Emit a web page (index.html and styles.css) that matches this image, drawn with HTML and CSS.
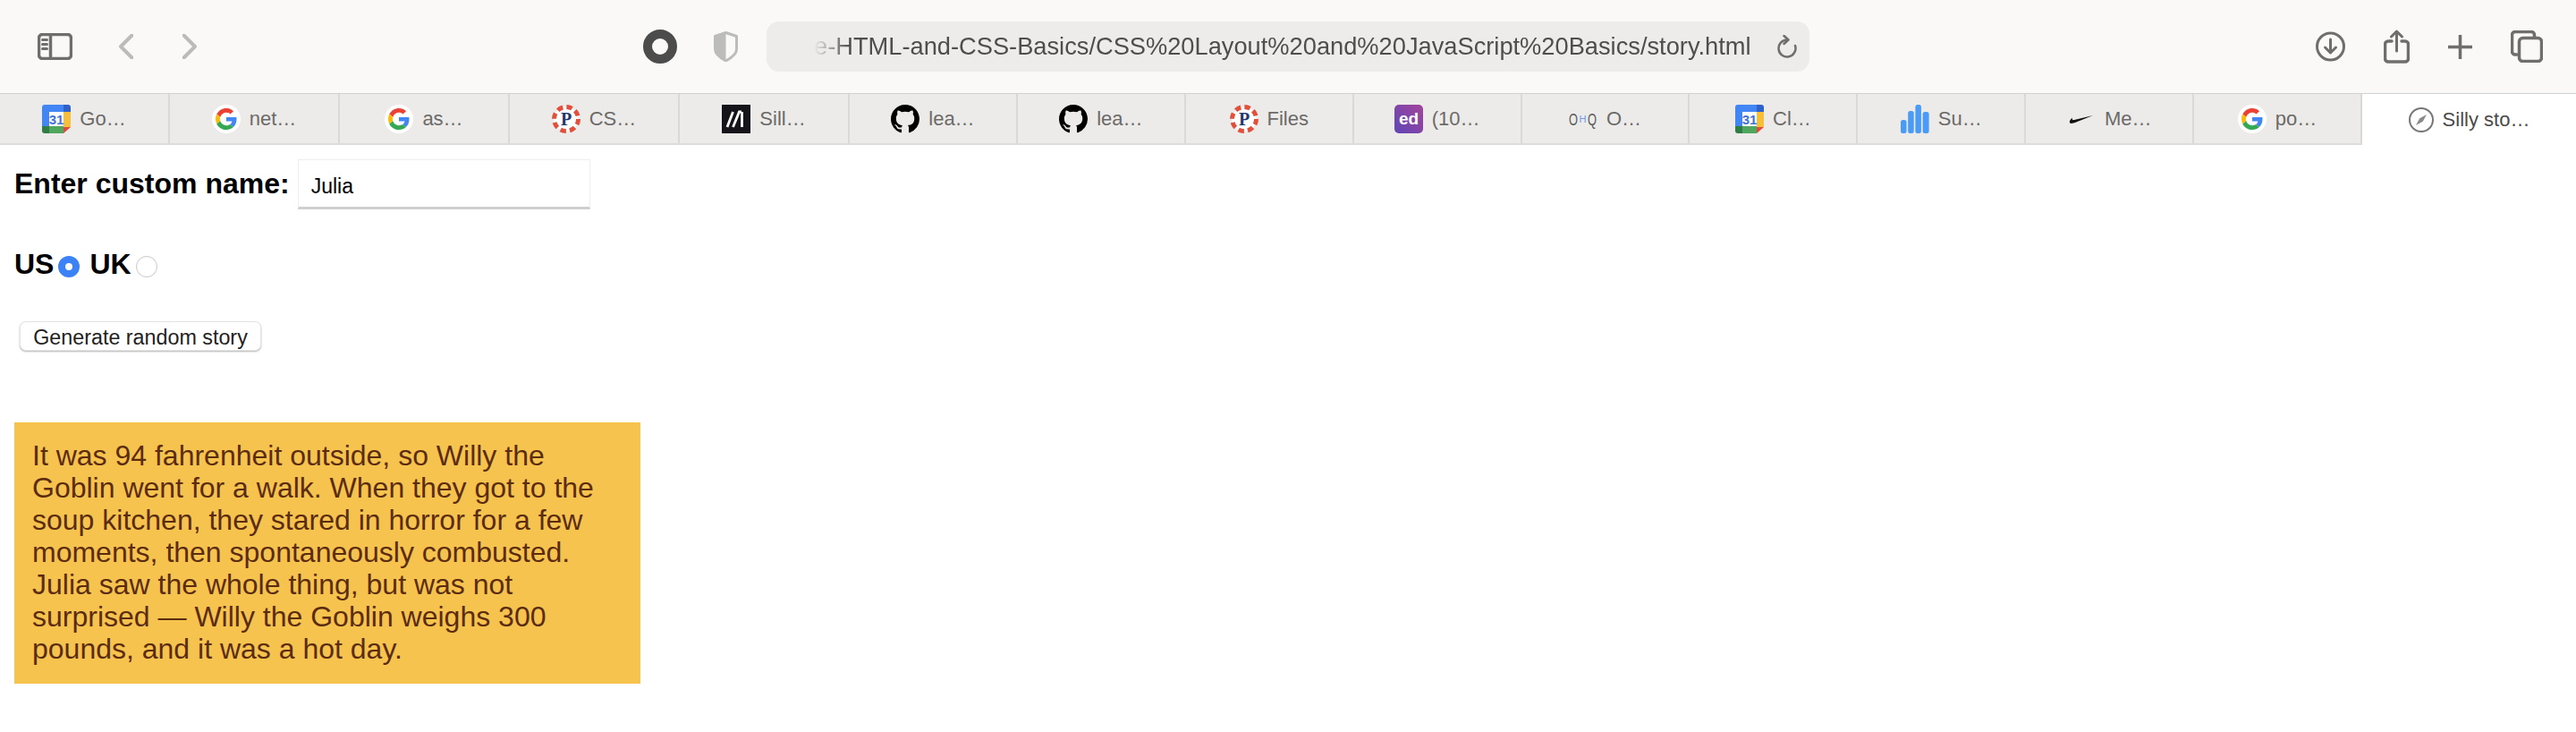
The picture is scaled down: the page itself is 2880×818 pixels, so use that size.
FILE: index.html
```html
<!DOCTYPE html>
<html lang="en">
<head>
    <meta charset="UTF-8">
    <title>Silly story generator</title>
    <link rel="stylesheet" href="styles.css">
</head>
<body>
    <!-- Shared favicons -->
    <svg class="defs" width="0" height="0" aria-hidden="true">
        <symbol id="ico-google" viewBox="0 0 32 32">
            <circle cx="16" cy="16" r="16" fill="#fff"/>
            <g transform="translate(4 4) scale(.5)">
                <path fill="#EA4335" d="M24 9.5c3.54 0 6.71 1.22 9.21 3.6l6.85-6.85C35.9 2.38 30.47 0 24 0 14.62 0 6.51 5.38 2.56 13.22l7.98 6.19C12.43 13.72 17.74 9.5 24 9.5z"/>
                <path fill="#4285F4" d="M46.98 24.55c0-1.57-.15-3.09-.38-4.55H24v9.02h12.94c-.58 2.96-2.26 5.48-4.78 7.18l7.73 6c4.51-4.18 7.09-10.36 7.09-17.65z"/>
                <path fill="#FBBC05" d="M10.53 28.59c-.48-1.45-.76-2.99-.76-4.59s.27-3.14.76-4.59l-7.98-6.19C.92 16.46 0 20.12 0 24c0 3.88.92 7.54 2.56 10.78l7.97-6.19z"/>
                <path fill="#34A853" d="M24 48c6.48 0 11.93-2.13 15.89-5.81l-7.73-6c-2.15 1.45-4.92 2.3-8.16 2.3-6.26 0-11.57-4.22-13.47-9.91l-7.98 6.19C6.51 42.62 14.62 48 24 48z"/>
            </g>
        </symbol>
        <symbol id="ico-calendar" viewBox="0 0 32 32">
            <path fill="#4285f4" d="M3 0h23v8H8v16H0V3a3 3 0 0 1 3-3z"/>
            <path fill="#2f62c9" d="M24 0h5a3 3 0 0 1 3 3v5h-8z"/>
            <rect x="24" y="8" width="8" height="17" fill="#f6bf3a"/>
            <path fill="#4ea75c" d="M8 24h16v8H8z"/>
            <path fill="#2f7d44" d="M0 24h8v8H3a3 3 0 0 1-3-3z"/>
            <path fill="#e5483a" d="M24 25h8l-8 7z"/>
            <rect x="8" y="8" width="16" height="16" fill="#fff"/>
        </symbol>
        <symbol id="ico-p" viewBox="0 0 32 32">
            <circle cx="16" cy="16" r="13.5" fill="#fff" stroke="#e2503c" stroke-width="5" stroke-dasharray="6.4 4.2"/>
        </symbol>
        <symbol id="ico-github" viewBox="0 0 16 16">
            <path fill="#000" d="M8 0C3.58 0 0 3.58 0 8c0 3.54 2.29 6.53 5.47 7.59.4.07.55-.17.55-.38 0-.19-.01-.82-.01-1.49-2.01.37-2.53-.49-2.69-.94-.09-.23-.48-.94-.82-1.13-.28-.15-.68-.52-.01-.53.63-.01 1.08.58 1.23.82.72 1.21 1.87.87 2.33.66.07-.52.28-.87.51-1.07-1.78-.2-3.64-.89-3.64-3.95 0-.87.31-1.59.82-2.15-.08-.2-.36-1.02.08-2.12 0 0 .67-.21 2.2.82.64-.18 1.32-.27 2-.27.68 0 1.36.09 2 .27 1.53-1.04 2.2-.82 2.2-.82.44 1.1.16 1.92.08 2.12.51.56.82 1.27.82 2.15 0 3.07-1.87 3.75-3.65 3.95.29.25.54.73.54 1.48 0 1.07-.01 1.93-.01 2.2 0 .21.15.46.55.38A8.013 8.013 0 0 0 16 8c0-4.42-3.58-8-8-8z"/>
        </symbol>
    </svg>

    <!-- Browser toolbar -->
    <header class="toolbar">
        <div class="toolbar-left">
            <svg class="tool-icon" width="39" height="30" viewBox="0 0 39 30">
                <rect x="1.5" y="1.5" width="36" height="27" rx="4"/>
                <path d="M14.5 1.5v27"/>
                <path class="thin" d="M5.5 7.5h5M5.5 12.5h5M5.5 17.5h5"/>
            </svg>
            <svg class="tool-icon faded" width="16" height="28" viewBox="0 0 16 28">
                <path d="M14.5 1.5 2 14l12.5 12.5"/>
            </svg>
            <svg class="tool-icon faded forward" width="16" height="28" viewBox="0 0 16 28">
                <path d="M1.5 1.5 14 14 1.5 26.5"/>
            </svg>
        </div>
        <div class="toolbar-center">
            <svg class="ring" width="38" height="38" viewBox="0 0 38 38">
                <circle cx="19" cy="19" r="14" fill="none" stroke="#4c4c4c" stroke-width="10"/>
            </svg>
            <svg class="shield" width="27" height="34" viewBox="0 0 27 34">
                <path fill="#bcbcba" d="M13.5 1.5 1.5 5.5V20c0 6 6.500 10 12 13z"/>
                <path fill="none" stroke="#bcbcba" stroke-width="3" stroke-linejoin="round" d="M13.5 1.500l12 4V20c0 6-6.500 10-12 13-5.500-3-12-7-12-13V5.500z"/>
            </svg>
            <div class="url-bar">
                <span class="url-text">e-HTML-and-CSS-Basics/CSS%20Layout%20and%20JavaScript%20Basics/story.html</span>
                <svg class="tool-icon reload" width="22" height="26" viewBox="0 0 22 26">
                    <path d="M11 5.500A9.500 9.500 0 1 0 20 12"/>
                    <path d="M7.500 1 12.500 5.500 7.500 10"/>
                </svg>
            </div>
        </div>
        <div class="toolbar-right">
            <svg class="tool-icon" width="33" height="34" viewBox="0 0 33 34">
                <circle class="thin" cx="16.500" cy="17" r="15"/>
                <path class="thin" d="M16.500 9v15M10.500 18l6 6 6-6"/>
            </svg>
            <svg class="tool-icon" width="29" height="38" viewBox="0 0 29 38">
                <path d="M9 13H5a3.500 3.500 0 0 0-3.500 3.500v16A3.500 3.500 0 0 0 5 36h19a3.500 3.500 0 0 0 3.500-3.500v-16A3.500 3.500 0 0 0 24 13h-4"/>
                <path class="thin" d="M14.500 24V2M8.500 8l6-6 6 6"/>
            </svg>
            <svg class="tool-icon" width="27" height="27" viewBox="0 0 27 27">
                <path d="M13.500 0v27M0 13.500h27"/>
            </svg>
            <svg class="tool-icon" width="36" height="36" viewBox="0 0 36 36">
                <path d="M7 27H5a3.500 3.500 0 0 1-3.500-3.500V5A3.500 3.500 0 0 1 5 1.500h18A3.500 3.500 0 0 1 26.500 5v3"/>
                <rect x="9.500" y="8.500" width="25" height="26" rx="4"/>
            </svg>
        </div>
    </header>

    <!-- Tab strip -->
    <nav class="tabs">
        <div class="tab tab-wide">
            <svg class="favicon" viewBox="0 0 32 32"><use href="#ico-calendar"/><text class="cal-num" x="16" y="22" text-anchor="middle">31</text></svg>
            <span>Go…</span>
        </div>
        <div class="tab tab-wide"><svg class="favicon"><use href="#ico-google"/></svg><span>net…</span></div>
        <div class="tab tab-wide"><svg class="favicon"><use href="#ico-google"/></svg><span>as…</span></div>
        <div class="tab tab-wide">
            <svg class="favicon" viewBox="0 0 32 32"><use href="#ico-p"/><text class="p-letter" x="16" y="23" text-anchor="middle">P</text></svg>
            <span>CS…</span>
        </div>
        <div class="tab tab-wide">
            <svg class="favicon" viewBox="0 0 32 32">
                <rect width="32" height="32" fill="#15141a"/>
                <path fill="none" stroke="#fff" stroke-width="2.800" d="M6 25 12.500 8M12.500 25 19.500 8 22 8M22.500 8v17"/>
            </svg>
            <span>Sill…</span>
        </div>
        <div class="tab"><svg class="favicon"><use href="#ico-github"/></svg><span>lea…</span></div>
        <div class="tab"><svg class="favicon"><use href="#ico-github"/></svg><span>lea…</span></div>
        <div class="tab">
            <svg class="favicon" viewBox="0 0 32 32"><use href="#ico-p"/><text class="p-letter" x="16" y="23" text-anchor="middle">P</text></svg>
            <span>Files</span>
        </div>
        <div class="tab">
            <svg class="favicon" viewBox="0 0 32 32">
                <defs>
                    <linearGradient id="ed-grad" x1="1" y1="0" x2="0" y2="1">
                        <stop offset="0" stop-color="#a3459c"/>
                        <stop offset="1" stop-color="#5f45b5"/>
                    </linearGradient>
                </defs>
                <rect width="32" height="32" rx="5" fill="url(#ed-grad)"/>
                <text class="ed-mark" x="16" y="22" text-anchor="middle">ed</text>
            </svg>
            <span>(10…</span>
        </div>
        <div class="tab">
            <svg class="favicon" viewBox="0 0 32 32">
                <text class="ohq-mark" x="0" y="23" textLength="10" lengthAdjust="spacingAndGlyphs">O</text>
                <text class="ohq-h" x="11.500" y="20" textLength="8" lengthAdjust="spacingAndGlyphs">H</text>
                <text class="ohq-mark" x="21" y="23" textLength="10" lengthAdjust="spacingAndGlyphs">Q</text>
            </svg>
            <span>O…</span>
        </div>
        <div class="tab">
            <svg class="favicon" viewBox="0 0 32 32"><use href="#ico-calendar"/><text class="cal-num" x="16" y="22" text-anchor="middle">31</text></svg>
            <span>Cl…</span>
        </div>
        <div class="tab">
            <svg class="favicon" viewBox="0 0 32 32">
                <g fill="#4a9bf5">
                    <rect x="0" y="17" width="6.500" height="15" rx="2.500"/>
                    <rect x="8.200" y="7" width="6.500" height="25" rx="2.500"/>
                    <rect x="16.400" y="0" width="6.500" height="32" rx="2.500"/>
                    <rect x="24.600" y="8" width="7" height="24" rx="2.500"/>
                </g>
            </svg>
            <span>Su…</span>
        </div>
        <div class="tab">
            <svg class="favicon" viewBox="0 0 32 32">
                <path fill="#111" d="M29 12 9.500 19.800C6 21.200 3 21.500 2.800 19.500 2.700 18 4 16.300 6 14.600 5.200 16.500 5.800 17.500 8 17z"/>
            </svg>
            <span>Me…</span>
        </div>
        <div class="tab"><svg class="favicon"><use href="#ico-google"/></svg><span>po…</span></div>
        <div class="tab tab-active">
            <svg class="compass" width="28" height="28" viewBox="0 0 28 28">
                <circle cx="14" cy="14" r="13" fill="none" stroke="#777" stroke-width="2"/>
                <path fill="#8a8a88" d="M20 8 15.800 15.800 8 20l4.200-7.800z"/>
            </svg>
            <span>Silly sto…</span>
        </div>
    </nav>

    <!-- Page content -->
    <main class="page">
        <div class="name-row">
            <label for="customname">Enter custom name:</label>
            <input id="customname" class="name-input" type="text" value="Julia">
        </div>
        <div class="radio-row">
            <label for="us">US</label>
            <input id="us" class="radio" type="radio" name="ukus" checked>
            <label class="uk-label" for="uk">UK</label>
            <input id="uk" class="radio" type="radio" name="ukus">
        </div>
        <button class="randomize" type="button">Generate random story</button>
        <p class="story">It was 94 fahrenheit outside, so Willy the Goblin went for a walk. When they got to the soup kitchen, they stared in horror for a few moments, then spontaneously combusted. Julia saw the whole thing, but was not surprised — Willy the Goblin weighs 300 pounds, and it was a hot day.</p>
    </main>
</body>
</html>
```

FILE: styles.css
```css
* {
    box-sizing: border-box;
}
body {
    margin: 0;
    font-family: "Liberation Sans", Arial, sans-serif;
    background-color: #fff;
    color: #000;
}
.defs {
    position: absolute;
}

/* toolbar */
.toolbar {
    display: flex;
    align-items: center;
    height: 104px;
    padding: 0 37px 0 42px;
    background-color: #faf9f7;
}
.toolbar-left {
    display: flex;
    align-items: center;
    gap: 52px;
}
.toolbar-center {
    display: flex;
    align-items: center;
    margin-left: 499px;
}
.toolbar-right {
    display: flex;
    align-items: center;
    gap: 43px;
    margin-left: auto;
}
.tool-icon {
    fill: none;
    stroke: #6f6e6c;
    stroke-width: 3.5;
    stroke-linecap: round;
    stroke-linejoin: round;
}
.tool-icon .thin {
    stroke-width: 3;
}
.faded {
    stroke: #bcbbb9;
    stroke-width: 4;
}
.forward {
    margin-left: 3px;
}
.shield {
    margin-left: 41px;
}
.url-bar {
    display: flex;
    align-items: center;
    width: 1166px;
    height: 56px;
    margin-left: 32px;
    padding: 0 14px 0 53px;
    background-color: #edecea;
    border-radius: 14px;
}
.url-text {
    font-size: 27.25px;
    color: #4f4e4c;
    white-space: nowrap;
    -webkit-mask-image: linear-gradient(to right, transparent 0, #000 40px);
    mask-image: linear-gradient(to right, transparent 0, #000 40px);
}
.reload {
    margin-left: auto;
    stroke-width: 2.5;
}

/* tabs */
.tabs {
    display: flex;
    height: 58px;
    background-color: #ecebe9;
    border-top: 1px solid #d2d1cf;
    border-bottom: 2px solid #dcdcdb;
    font-size: 22px;
    color: #6b6a68;
}
.tab {
    flex: 1;
    display: flex;
    align-items: center;
    justify-content: center;
    gap: 10px;
    border-right: 2px solid #dad9d7;
}
.tab-wide {
    flex: 0 0 190px;
}
.favicon {
    width: 32px;
    height: 32px;
    flex-shrink: 0;
}
.tab-active {
    flex: 0 0 239px;
    border-right: none;
    background-color: #fff;
    margin-bottom: -2px;
    color: #4b4a49;
}
.cal-num {
    font: bold 15px "Liberation Sans", sans-serif;
    fill: #3f73d8;
}
.p-letter {
    font: bold 20px "Liberation Serif", serif;
    fill: #24386f;
}
.ed-mark {
    font: bold 19px "Liberation Sans", sans-serif;
    fill: #fff;
}
.ohq-mark {
    font: 19px "Liberation Sans", sans-serif;
    fill: #555;
}
.ohq-h {
    font: 10px "Liberation Sans", sans-serif;
    fill: #6c9bf0;
}

/* page */
.page {
    padding: 16px 0 0 16px;
}
.name-row {
    display: flex;
    align-items: baseline;
    font-size: 32px;
    font-weight: bold;
}
.name-input {
    width: 327px;
    height: 56px;
    margin-left: 9px;
    padding: 6px 14px 0;
    font: 23px "Liberation Sans", sans-serif;
    color: #000;
    background-color: #fff;
    border: 1px solid #eeeeee;
    border-bottom: 3px solid #cfcfcf;
    outline: none;
}
.radio-row {
    display: flex;
    align-items: flex-start;
    margin-top: 43px;
    font-size: 32px;
    font-weight: bold;
}
.radio {
    -webkit-appearance: none;
    appearance: none;
    width: 24px;
    height: 24px;
    margin: 9px 0 0 5px;
    background-color: #fff;
    border: 1px solid #c8c8c8;
    border-radius: 50%;
}
.radio:checked {
    border: 8px solid #3b82f6;
}
.uk-label {
    margin-left: 11px;
}
.randomize {
    display: block;
    width: 270px;
    height: 33px;
    margin: 45px 0 0 6px;
    padding: 4px 0 0;
    font: 23.3px "Liberation Sans", sans-serif;
    color: #222;
    background-color: #fff;
    border: 1px solid #e4e4e4;
    border-radius: 7px;
    box-shadow: 0 1px 2px rgba(0, 0, 0, 0.3);
}
.story {
    width: 700px;
    margin: 80px 0 0;
    padding: 19px 20px 21px;
    font-size: 32px;
    line-height: 36px;
    color: #5c2c10;
    background-color: #f6c34e;
}
```
